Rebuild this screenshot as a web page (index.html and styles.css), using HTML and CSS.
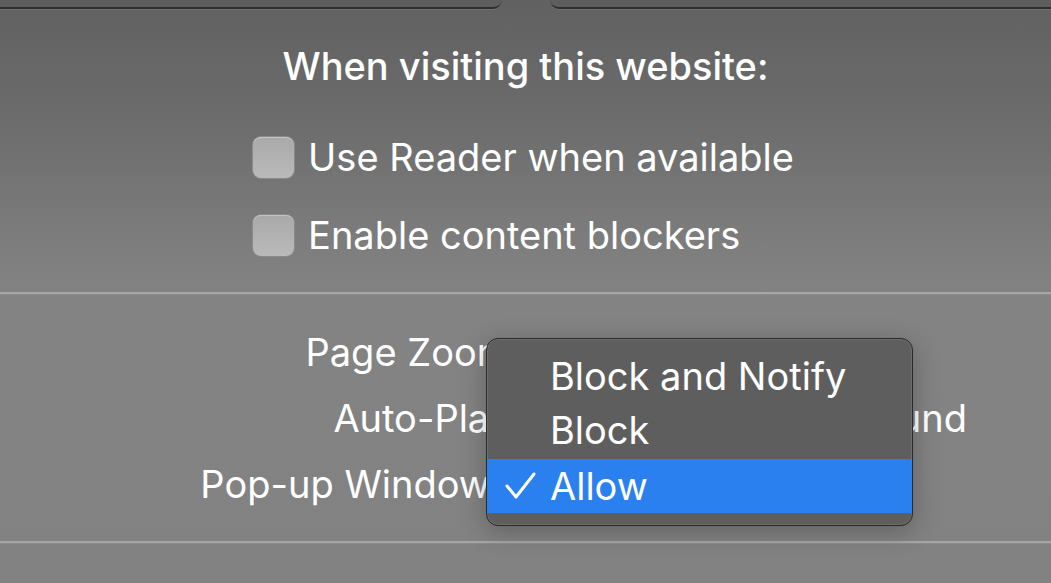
FILE: index.html
```html
<!DOCTYPE html>
<html lang="en">

<head>
    <meta charset="UTF-8">
    <title>Website Settings</title>
    <link rel="stylesheet" href="styles.css">
</head>

<body>
    <div class="tabs">
        <div class="tab tab_left"></div>
        <div class="tab_gap"></div>
        <div class="tab tab_right"></div>
    </div>

    <div class="panel">
        <div class="options">
            <h1 class="title">When visiting this website:</h1>
            <div class="checks">
                <label class="check"><span class="box"></span>Use Reader when available</label>
                <label class="check"><span class="box"></span>Enable content blockers</label>
            </div>
        </div>

        <div class="divider"></div>

        <div class="settings">
            <div class="label">Page Zoom</div>
            <div class="value">100%</div>
            <div class="label">Auto-Play</div>
            <div class="value value_right">Stop Media with Sound</div>
            <div class="label">Pop-up Windows</div>
            <div class="value">Allow</div>

            <ul class="menu">
                <li>Block and Notify</li>
                <li>Block</li>
                <li class="selected">
                    <svg class="tick" width="32" height="30" viewBox="0 0 32 30">
                        <polyline points="2,15 11,26 29,3" fill="none" stroke="#fff" stroke-width="3" stroke-linecap="round" stroke-linejoin="round"/>
                    </svg>
                    Allow
                </li>
            </ul>
        </div>

        <div class="divider"></div>
    </div>
</body>

</html>
```

FILE: styles.css
```css
html, body {
    margin: 0;
    height: 100%;
}

body {
    width: 1051px;
    height: 583px;
    overflow: hidden;
    font-family: "Inter", "Noto Sans", sans-serif;
    color: #fff;
    background: linear-gradient(#616161 0, #6c6c6c 120px, #7e7e7e 250px, #838383 300px, #828282 583px);
}

.tabs {
    display: flex;
    height: 9px;
}

.tab {
    flex: 1;
    background: #5e5e5e;
    border-bottom: 2px solid #2f2f2f;
    box-shadow: 0 1px 0 #707070;
}

.tab_left {
    border-bottom-right-radius: 18px;
}

.tab_right {
    border-bottom-left-radius: 18px;
}

.tab_gap {
    width: 48px;
}

.options {
    display: flex;
    flex-direction: column;
    align-items: center;
    padding: 37px 0 36px;
}

.title {
    margin: 0 0 50px;
    font-size: 38px;
    font-weight: 500;
    line-height: 40px;
}

.checks {
    display: flex;
    flex-direction: column;
    align-items: flex-start;
    gap: 36px;
    margin-left: -4px;
}

.check {
    display: flex;
    align-items: center;
    gap: 14px;
    font-size: 38px;
    line-height: 42px;
    height: 42px;
}

.box {
    width: 41px;
    height: 41px;
    border-radius: 8px;
    background: linear-gradient(#a9a9a9, #bababa);
    box-shadow: inset 0 1px 0 #c4c4c4, 0 0 0 1px #8a8a8a;
}

.divider {
    height: 2px;
    background: #a6a6a6;
    box-shadow: 0 1px 0 #8c8c8c;
}

.settings {
    position: relative;
    display: grid;
    grid-template-columns: 510px 1fr;
    grid-auto-rows: 66px;
    padding: 25px 84px 24px 0;
    font-size: 38px;
}

.label {
    text-align: right;
    line-height: 66px;
    white-space: nowrap;
}

.value {
    padding-left: 44px;
    line-height: 66px;
    white-space: nowrap;
    min-width: 0;
}

.value_right {
    display: flex;
    justify-content: flex-end;
    padding-left: 0;
}

.menu {
    position: absolute;
    left: 486px;
    top: 44px;
    width: 425px;
    margin: 0;
    padding: 10px 0 12px;
    list-style: none;
    background: #5e5e5e;
    border: 1px solid #2a2a2a;
    border-radius: 12px;
    box-shadow: inset 0 0 0 1px #6e6e6e, 0 6px 26px rgba(0, 0, 0, 0.25);
    overflow: hidden;
}

.menu li {
    position: relative;
    height: 54px;
    line-height: 54px;
    padding-left: 63px;
    font-size: 38px;
}

.menu .selected {
    background: #2a80ee;
    margin-top: 2px;
}

.tick {
    position: absolute;
    left: 18px;
    top: 12px;
}
```
